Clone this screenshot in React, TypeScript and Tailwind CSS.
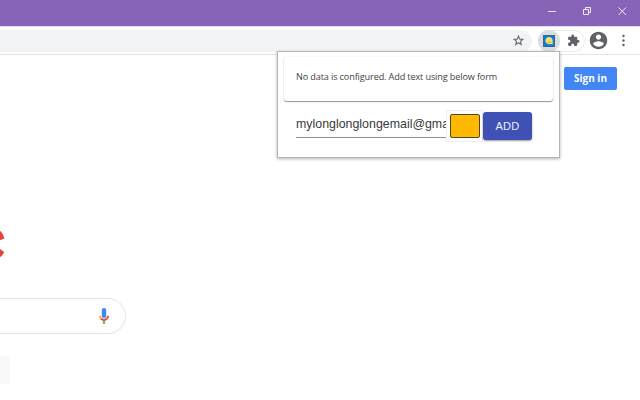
import React from "react";

function WindowBar() {
  return (
    <div className="flex h-[27px] items-start justify-end border-b border-[#e6dcf2] bg-[#8764b8]">
      <svg width="100" height="22" viewBox="0 0 100 22" fill="none" stroke="#eee8f6" strokeWidth="1">
        <path d="M8 11.5h8" />
        <path d="M43.5 9.5h5v5h-5zM45.5 9.5v-2h5v5h-2" />
        <path d="M78.500 7.500l7.500 7.500M86 7.500l-7.500 7.500" />
      </svg>
    </div>
  );
}

function Toolbar() {
  return (
    <div className="flex h-[28px] items-center border-b border-[#e3e4e6] bg-white">
      <div className="flex h-[22px] w-[532px] items-center justify-end rounded-r-full bg-[#f1f3f4] pr-[7px]">
        <svg width="13" height="13" viewBox="0 0 24 24" fill="#5f6368" stroke="#5f6368" strokeWidth=".4">
          <path d="M22 9.240l-7.190-.62L12 2 9.190 8.630 2 9.240l5.460 4.730L5.820 21 12 17.270 18.180 21l-1.630-7.030L22 9.240zM12 15.400l-3.760 2.270 1-4.280-3.320-2.880 4.380-.38L12 6.100l1.710 4.040 4.380.38-3.320 2.880 1 4.280L12 15.400z" />
        </svg>
      </div>
      <div className="ml-[6px] flex h-[22px] w-[47px] items-center rounded-full border border-[#e8eaed]">
        <div className="-ml-px flex size-[22px] shrink-0 items-center justify-center rounded-full bg-[#dcdddf]">
          <svg width="12" height="12" viewBox="0 0 13 13">
            <path d="M0 0h13v13H0z" fill="#36689b" />
            <path d="M1 1h11v11H1z" fill="#087fd3" />
            <path d="M6.500 2.200c2.400 0 4 1.600 4 4v4.200L8.800 9.700C5.500 10.900 2.600 9 2.600 6.200c0-2.400 1.600-4 3.900-4z" fill="#f6dc70" />
            <path d="M5 8.300l2.500-.8 1 1.200" fill="none" stroke="#b49a45" strokeWidth=".7" />
          </svg>
        </div>
        <svg className="ml-[7px]" width="13" height="13" viewBox="0 0 24 24" fill="#5f6368">
          <path d="M20.500 11H19V7c0-1.100-.9-2-2-2h-4V3.500a2.500 2.500 0 0 0-5 0V5H4c-1.100 0-1.990.9-1.990 2v3.800H3.500c1.490 0 2.700 1.210 2.700 2.700s-1.210 2.700-2.700 2.700H2V20c0 1.100.9 2 2 2h3.800v-1.500c0-1.490 1.210-2.700 2.700-2.700s2.700 1.210 2.700 2.700V22H17c1.100 0 2-.9 2-2v-4h1.500a2.500 2.500 0 0 0 0-5z" />
        </svg>
      </div>
      <svg className="ml-[3px]" width="21" height="21" viewBox="0 0 24 24" fill="#5f6368">
        <path d="M12 2C6.480 2 2 6.480 2 12s4.480 10 10 10 10-4.480 10-10S17.520 2 12 2zm0 3c1.660 0 3 1.340 3 3s-1.340 3-3 3-3-1.340-3-3 1.340-3 3-3zm0 14.200c-2.500 0-4.710-1.280-6-3.220.03-1.990 4-3.080 6-3.080 1.990 0 5.970 1.090 6 3.080-1.290 1.940-3.500 3.220-6 3.220z" />
      </svg>
      <svg className="ml-[12px]" width="5" height="13" viewBox="0 0 5 13" fill="#5f6368">
        <circle cx="2.500" cy="2" r="1.200" />
        <circle cx="2.500" cy="6.500" r="1.200" />
        <circle cx="2.500" cy="11" r="1.200" />
      </svg>
    </div>
  );
}

function Popup() {
  return (
    <div className="absolute left-[277px] top-[51px] h-[107px] w-[283px] border border-[#b5b5b5] bg-white pl-[6px] pt-[5px] shadow-[0_1px_3px_rgba(0,0,0,.3)]">
      <div className="h-[44px] w-[269px] rounded-[3px] bg-white pl-[12px] pt-[12px] shadow-[0_1px_1px_rgba(0,0,0,.4),0_0_2px_rgba(0,0,0,.12)]">
        <p className="whitespace-nowrap font-['Open_Sans',sans-serif] text-[9.150px] leading-[15px] tracking-[-0.135px] text-[#444]">
          No data is configured. Add text using below form
        </p>
      </div>
      <div className="mt-[8px] flex pl-[12px]">
        <div className="mt-[3px] h-[26px] w-[150px] overflow-hidden whitespace-nowrap border-b border-[#919191] font-['Liberation_Sans',Arial,sans-serif] text-[12.400px] leading-[25px] text-[#3b3b3b]">
          mylonglonglongemail@gma
        </div>
        <div className="mt-px flex h-[32px] w-[37px] items-center justify-center border border-[#eeeeee] bg-white">
          <div className="h-[24px] w-[30px] rounded-[2px] border border-[#51451f] bg-[#ffb900]" />
        </div>
        <button className="mt-[3px] h-[28px] w-[49px] rounded-[3px] bg-[#3f51b5] font-['Liberation_Sans',Arial,sans-serif] text-[11px] tracking-[.3px] text-[#eef0fc] shadow-[0_1px_2px_rgba(0,0,0,.4)]">
          ADD
        </button>
      </div>
    </div>
  );
}

export default function App() {
  return (
    <div className="relative flex h-[400px] w-[640px] flex-col overflow-hidden bg-white">
      <WindowBar />
      <Toolbar />
      <div className="flex justify-end pr-[23px] pt-[12px]">
        <button className="h-[23px] w-[53px] rounded-[2px] bg-[#4285f4] font-['Open_Sans',sans-serif] text-[10px] font-bold leading-[23px] text-white">
          Sign in
        </button>
      </div>
      <svg className="mt-[140px] shrink-0" width="6" height="30" viewBox="0 0 6 30" fill="#ea4335">
        <path d="M0 .8C2 2.500 3.600 5 4.300 8.500L0 10.300zM0 19l4.200 3C3 24.500 1.500 26.300 0 27.300z" />
      </svg>
      <div className="mt-[38px] flex h-[36px] w-[126px] shrink-0 items-center justify-end rounded-r-full border border-l-0 border-[#e4e6e9] pr-[13px]">
        <svg width="16" height="16" viewBox="0 0 24 24">
          <path d="M12 15c1.660 0 3-1.310 3-2.970V3.010C15 1.340 13.660 0 12 0S9 1.340 9 3.010v9.020C9 13.690 10.340 15 12 15z" fill="#4285f4" stroke="#4285f4" strokeWidth=".6" />
          <path d="M11 18.920h2V24h-2z" fill="#34a853" stroke="#34a853" strokeWidth=".5" />
          <path d="M7 12H5c0 1.930.78 3.680 2.050 4.950l1.410-1.410C7.560 14.630 7 13.400 7 12z" fill="#fbbc05" stroke="#fbbc05" strokeWidth=".9" />
          <path d="M12 17c-1.380 0-2.630-.56-3.540-1.470l-1.410 1.410C8.320 18.200 10.070 19 12 19c3.870 0 6.990-3.140 6.990-7H17c0 2.760-2.230 5-5 5z" fill="#ea4335" stroke="#ea4335" strokeWidth=".8" />
        </svg>
      </div>
      <div className="mt-[22px] h-[28px] w-[10px] shrink-0 rounded-r-[2px] bg-[#f8f9fa]" />
      <Popup />
    </div>
  );
}
